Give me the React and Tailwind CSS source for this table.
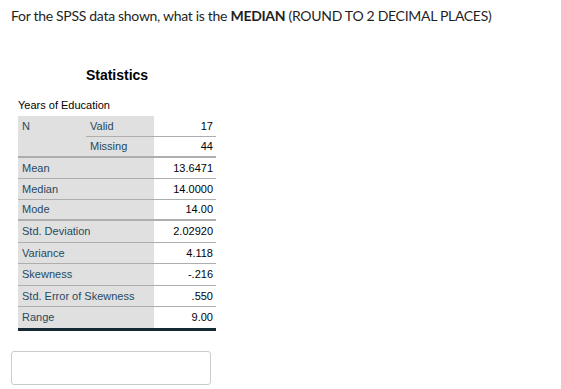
import React from "react";

const rows = [
  { label: "Mean", value: "13.6471", h: "h-[21px]", b: "border-b" },
  { label: "Median", value: "14.0000", h: "h-[21px]", b: "border-b" },
  { label: "Mode", value: "14.00", h: "h-[21px]", b: "border-b-2" },
  { label: "Std. Deviation", value: "2.02920", h: "h-[22px]", b: "border-b" },
  { label: "Variance", value: "4.118", h: "h-[21px]", b: "border-b" },
  { label: "Skewness", value: "-.216", h: "h-[22px]", b: "border-b" },
  { label: "Std. Error of Skewness", value: ".550", h: "h-[21px]", b: "border-b" },
  { label: "Range", value: "9.00", h: "h-[21px]", b: "" },
];

export default function App() {
  return (
    <div className="bg-white w-[561px] h-[389px] relative">
      <p className="pl-[11px] pt-[6px] text-[14px] leading-[20px] tracking-[-0.3px] whitespace-nowrap text-[#1f1f1f] font-['Lato',sans-serif]">
        For the SPSS data shown, what is the <b className="font-bold">MEDIAN</b> (ROUND TO 2 DECIMAL PLACES)
      </p>

      <div className="ml-[18px] mt-[41px] w-[198px] font-['Liberation_Sans',Arial,sans-serif]">
        <div className="text-center text-[14px] leading-[16px] font-bold text-[#010205]">Statistics</div>
        <div className="mt-[16px] text-[11px] leading-[13px] text-[#010205]">Years of Education</div>

        <div className="mt-[4px] text-[11px] leading-[13px]">
          {/* N: valid / missing */}
          <div className="grid grid-cols-[68px_68px_62px] border-b-2 border-[#aeaeae]">
            <div className="row-span-2 bg-[#e0e0e0] text-[#264a60] pl-[4px] pt-[4px]">N</div>
            <div className="h-[21px] bg-[#e0e0e0] text-[#264a60] pl-[4px] flex items-center border-b border-[#aeaeae]">Valid</div>
            <div className="h-[21px] text-[#010205] pr-[3px] flex items-center justify-end border-b border-[#aeaeae]">17</div>
            <div className="h-[19px] bg-[#e0e0e0] text-[#264a60] pl-[4px] flex items-center">Missing</div>
            <div className="h-[19px] text-[#010205] pr-[3px] flex items-center justify-end">44</div>
          </div>

          {rows.map((r) => (
            <div
              key={r.label}
              className={`grid grid-cols-[136px_62px] box-border ${r.h} ${r.b} border-[#aeaeae]`}
            >
              <div className="bg-[#e0e0e0] text-[#264a60] pl-[4px] flex items-center">{r.label}</div>
              <div className="text-[#010205] pr-[3px] flex items-center justify-end">{r.value}</div>
            </div>
          ))}
          <div className="h-[3px] bg-[#152935]" />
        </div>
      </div>

      <div className="ml-[11px] mt-[20px] w-[200px] h-[34px] border border-[#cccccc] rounded-[3px] bg-white" />
    </div>
  );
}
